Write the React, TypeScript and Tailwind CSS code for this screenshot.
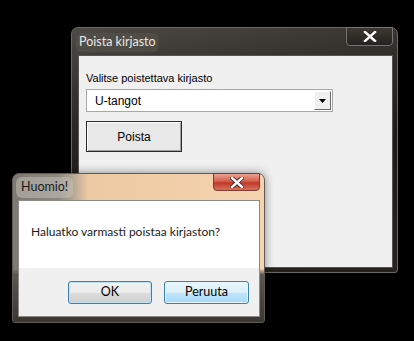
import type {JSX} from 'react';

const uiFont = {fontFamily: 'Lato, "Open Sans", sans-serif'};

function CloseX({className}: {className?: string}): JSX.Element {
    return (
        <svg width="14" height="11" viewBox="0 0 14 11" className={className}>
            <path d="M2 1 L12 10 M12 1 L2 10" stroke="#3a2a28" strokeWidth="4.2" strokeLinecap="square"/>
            <path d="M2 1 L12 10 M12 1 L2 10" stroke="#ffffff" strokeWidth="2.4" strokeLinecap="square"/>
        </svg>
    );
}

function BackWindow(): JSX.Element {
    return (
        <div
            className="absolute left-[71px] top-[27px] w-[327px] h-[246px] rounded-t-[7px] rounded-b-[3px] border border-[#6b6762] bg-[linear-gradient(170deg,#4d4944_0%,#2e2a26_30%,#1c1916_55%,#26221f_100%)] flex flex-col">
            <div className="relative h-[27px] shrink-0">
                <span
                    className="absolute left-[4px] top-[5px] text-[12.5px] text-[#e8e8e8] px-[3px] rounded-[6px] bg-[#57534d]/60"
                    style={uiFont}>Poista kirjasto</span>
                <div
                    className="absolute right-[4px] top-[-1px] w-[47px] h-[19px] rounded-b-[4px] border border-[#77726c] bg-[linear-gradient(#3c3833,#25221f)] flex items-center justify-center">
                    <CloseX/>
                </div>
            </div>
            <div className="ml-[6px] mr-[4px] mb-[4px] flex-1 border border-[#575350] bg-[#f0f0f0] px-[7px] pt-[15px] font-['Liberation_Sans',sans-serif] text-[11px] text-black">
                <div className="leading-[14px]">Valitse poistettava kirjasto</div>
                <div className="mt-[4px] w-[247px] h-[23px] border border-[#a8a8a8] bg-white flex items-center">
                    <span className="flex-1 pl-[8px] text-[12px]">U-tangot</span>
                    <div
                        className="w-[17px] h-[19px] mr-[1px] bg-[#f0f0f0] border border-t-white border-l-white border-r-[#696969] border-b-[#696969] flex items-center justify-center">
                        <svg width="7" height="4" viewBox="0 0 7 4">
                            <path d="M0 0 H7 L3.5 4 Z" fill="#000"/>
                        </svg>
                    </div>
                </div>
                <button
                    className="mt-[9px] w-[96px] h-[31px] border border-[#2a2a2a] bg-[#e8e8e8] shadow-[inset_1px_1px_0_#fff,inset_-1px_-1px_0_#a0a0a0] text-[12px]">
                    Poista
                </button>
            </div>
        </div>
    );
}

function AlertDialog(): JSX.Element {
    return (
        <div
            className="absolute left-[12px] top-[173px] w-[253px] h-[150px] rounded-t-[7px] rounded-b-[3px] border border-[#5e5a55] shadow-[0_0_10px_rgba(0,0,0,0.45)] bg-[linear-gradient(180deg,transparent_0%,transparent_64%,#5a5650_68%,#3a3733_100%),linear-gradient(90deg,#7d7972_0%,#8d887f_18%,#b5a895_24%,#ecc9a3_30%,#f6d4af_100%)] flex flex-col">
            <div className="relative h-[26px] shrink-0">
                <span
                    className="absolute left-[3px] top-[3px] px-[5px] py-[1px] text-[12.5px] text-[#1a1a1a] rounded-[6px] bg-[#c8c4bc]/50"
                    style={uiFont}>Huomio!</span>
                <div
                    className="absolute right-[4px] top-[-1px] w-[47px] h-[18px] rounded-b-[4px] border border-[#7a3a30] bg-[linear-gradient(#eaa293_0%,#d4604c_45%,#c0392b_55%,#d8705c_100%)] flex items-center justify-center">
                    <CloseX/>
                </div>
            </div>
            <div className="ml-[5px] mr-[4px] mb-[5px] flex-1 border border-[#8d8a85] flex flex-col" style={uiFont}>
                <div className="h-[67px] bg-white pl-[12px] pt-[22px] text-[12px] text-[#1a1a1a]">
                    Haluatko varmasti poistaa kirjaston?
                </div>
                <div className="flex-1 bg-[#f0f0f0] flex items-start gap-[12px] pl-[49px] pt-[13px] text-[12.5px] text-black">
                    <button
                        className="w-[84px] h-[23px] rounded-[3px] border border-[#3c7fb1] bg-[linear-gradient(#f2f2f2_0%,#ebebeb_50%,#dddddd_51%,#cfcfcf_100%)] shadow-[inset_0_0_0_1px_#bfe3f5]">
                        OK
                    </button>
                    <button
                        className="w-[85px] h-[23px] rounded-[3px] border border-[#3c7fb1] bg-[linear-gradient(#eaf6fd_0%,#d9f0fc_50%,#bee6fd_51%,#a7d9f5_100%)] shadow-[inset_0_0_0_1px_#e8f6fd]">
                        Peruuta
                    </button>
                </div>
            </div>
        </div>
    );
}

function App(): JSX.Element {
    return (
        <div className="relative w-[414px] h-[341px] bg-black overflow-hidden">
            <BackWindow/>
            <AlertDialog/>
        </div>
    );
}

export default App;
